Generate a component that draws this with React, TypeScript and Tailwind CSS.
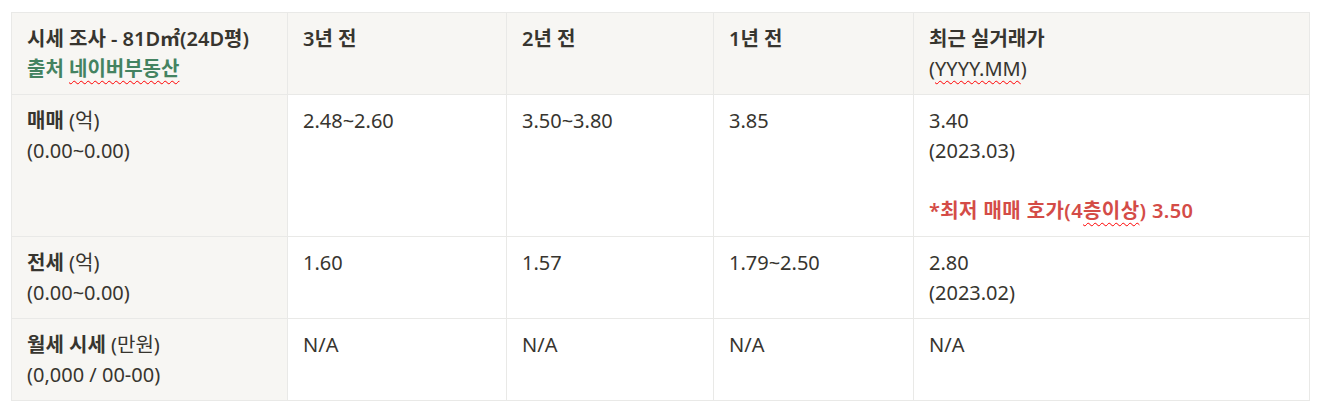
import React from 'react';

const font = { fontFamily: '"Noto Sans", "Noto Sans CJK KR", sans-serif' };

const Squiggle: React.FC<{ children: React.ReactNode }> = ({ children }) => (
    <span className="underline decoration-wavy decoration-[#ff0000] decoration-1 underline-offset-[4px]">{children}</span>
);

const th = 'border border-[#e9e9e7] bg-[#f7f6f3] px-[15px] pt-[11px] pb-[10px] align-top text-left font-semibold';
const rowHead = 'border border-[#e9e9e7] bg-[#f7f6f3] px-[15px] pt-[11px] pb-[10px] align-top text-left font-normal';
const td = 'border border-[#e9e9e7] bg-white px-[15px] pt-[11px] pb-[10px] align-top text-left font-normal';

const rows = [
    {
        label: '매매',
        unit: '(억)',
        hint: '(0.00~0.00)',
        cells: ['2.48~2.60', '3.50~3.80', '3.85'],
        recent: (
            <>
                3.40
                <br />
                (2023.03)
                <br />
                <br />
                <span className="font-semibold tracking-[0.02em] text-[#d44c47]">
                    *최저 매매 호가(4<Squiggle>층이상</Squiggle>) 3.50
                </span>
            </>
        )
    },
    {
        label: '전세',
        unit: '(억)',
        hint: '(0.00~0.00)',
        cells: ['1.60', '1.57', '1.79~2.50'],
        recent: (
            <>
                2.80
                <br />
                (2023.02)
            </>
        )
    },
    {
        label: '월세 시세',
        unit: '(만원)',
        hint: '(0,000 / 00-00)',
        cells: ['N/A', 'N/A', 'N/A'],
        recent: <>N/A</>
    }
];

export default function App() {
    return (
        <div className="bg-white min-h-[409px] pl-[11px] pt-[12px]" style={font}>
            <table className="border-collapse text-[20px] leading-[30px] text-[#37352f] table-fixed w-[1298px]">
                <colgroup>
                    <col className="w-[276px]" />
                    <col className="w-[219px]" />
                    <col className="w-[207px]" />
                    <col className="w-[200px]" />
                    <col className="w-[396px]" />
                </colgroup>
                <thead>
                    <tr>
                        <th className={th}>
                            시세 조사 - 81D㎡(24D평)
                            <br />
                            <span className="text-[#448361]">
                                출처 <Squiggle>네이버부동산</Squiggle>
                            </span>
                        </th>
                        <th className={th}>3년 전</th>
                        <th className={th}>2년 전</th>
                        <th className={th}>1년 전</th>
                        <th className={th}>
                            최근 실거래가
                            <br />
                            <span className="font-normal">
                                (<Squiggle>YYYY.MM</Squiggle>)
                            </span>
                        </th>
                    </tr>
                </thead>
                <tbody>
                    {rows.map((row) => (
                        <tr key={row.label}>
                            <td className={rowHead}>
                                <span className="font-semibold">{row.label}</span> {row.unit}
                                <br />
                                {row.hint}
                            </td>
                            {row.cells.map((c, i) => (
                                <td key={i} className={td}>
                                    {c}
                                </td>
                            ))}
                            <td className={td}>{row.recent}</td>
                        </tr>
                    ))}
                </tbody>
            </table>
        </div>
    );
}
